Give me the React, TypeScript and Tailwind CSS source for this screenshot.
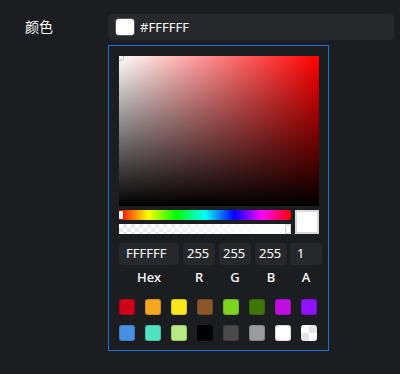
import React from 'react';

const row1 = ['#d0021b', '#f5a623', '#f8e71c', '#8b572a', '#7ed321', '#417505', '#bd10e0', '#9013fe'];
const row2 = ['#4a90e2', '#50e3c2', '#b8e986', '#000000', '#4a4a4a', '#9b9b9b', '#ffffff'];

function Swatch({ color }: { color: string }) {
  return (
    <div
      className="w-4 h-4 rounded-[3px] shadow-[inset_0_0_0_1px_rgba(0,0,0,0.15)]"
      style={{ backgroundColor: color }}
    />
  );
}

export default function App() {
  return (
    <div className="w-[400px] h-[374px] bg-[#1c1d21] text-white font-['Noto_Sans','Noto_Sans_CJK_SC',sans-serif] overflow-hidden">
      <div className="flex pt-[14px]">
        <div className="w-[108px] pl-[25px] pt-[4px] text-[14px] leading-[18px]">颜色</div>

        <div className="flex flex-col">
          {/* trigger */}
          <div className="w-[286px] h-[26px] rounded-[4px] bg-[#27282c] flex items-center pl-2 gap-[6px]">
            <div className="w-[18px] h-4 rounded-[3px] bg-white shadow-[0_0_0_1px_rgba(120,120,120,0.6)]" />
            <span className="text-[13px] leading-none">#FFFFFF</span>
          </div>

          {/* popover */}
          <div className="mt-[5px] w-[221px] border border-[#1f6fd8] pt-[10px] pl-[10px] pb-[9px]">
            <div className="relative w-[200px] h-[150px] bg-[#ff0000] overflow-hidden">
              <div className="absolute inset-0 bg-gradient-to-r from-white to-transparent" />
              <div className="absolute inset-0 bg-gradient-to-t from-black to-transparent" />
              <div className="absolute -left-[3px] -top-[3px] w-[7px] h-[7px] rounded-full border border-white shadow-[0_0_0_1px_rgba(0,0,0,0.3)]" />
            </div>

            <div className="flex mt-1 gap-1">
              <div className="flex flex-col gap-1">
                <div className="relative w-[172px] h-[10px] rounded-r-[2px] bg-[linear-gradient(to_right,#f00_0%,#ff0_17%,#0f0_33%,#0ff_50%,#00f_67%,#f0f_83%,#f00_100%)]">
                  <div className="absolute left-0 top-[1px] w-1 h-2 bg-white rounded-[1px] shadow-[0_0_2px_rgba(0,0,0,0.6)]" />
                </div>
                <div className="relative w-[172px] h-[10px] bg-white [background-image:conic-gradient(#e6e6e6_90deg,#fff_90deg_180deg,#e6e6e6_180deg_270deg,#fff_270deg)] [background-size:8px_8px]">
                  <div className="absolute inset-0 bg-gradient-to-r from-transparent to-white" />
                  <div className="absolute right-[1px] top-[1px] w-1 h-2 bg-white rounded-[1px] shadow-[0_0_0_1px_#ccc]" />
                </div>
              </div>
              <div className="w-6 h-6 bg-white border-2 border-[#d9d9d9]" />
            </div>

            <div className="flex gap-1 mt-[9px] text-[13px]">
              <div className="flex flex-col items-center">
                <div className="w-[60px] h-[22px] rounded-[4px] bg-[#27282c] flex items-center px-[7px]">FFFFFF</div>
                <div className="mt-[4px] text-[13px] leading-[16px] font-medium">Hex</div>
              </div>
              {['R', 'G', 'B'].map((l) => (
                <div key={l} className="flex flex-col items-center">
                  <div className="w-8 h-[22px] rounded-[4px] bg-[#27282c] flex items-center px-[4px]">255</div>
                  <div className="mt-[4px] text-[13px] leading-[16px] font-medium">{l}</div>
                </div>
              ))}
              <div className="flex flex-col items-center -ml-[1px]">
                <div className="w-8 h-[22px] rounded-[4px] bg-[#27282c] flex items-center px-[7px]">1</div>
                <div className="mt-[4px] text-[13px] leading-[16px] font-medium">A</div>
              </div>
            </div>

            <div className="mt-[14px] grid grid-cols-[repeat(8,16px)] gap-x-[10px] gap-y-[10px]">
              {row1.map((c) => (
                <Swatch key={c} color={c} />
              ))}
              {row2.map((c) => (
                <Swatch key={c} color={c} />
              ))}
              <div className="w-4 h-4 rounded-[3px] [background-image:conic-gradient(#e6e6e6_90deg,#fff_90deg_180deg,#e6e6e6_180deg_270deg,#fff_270deg)]" />
            </div>
          </div>
        </div>
      </div>
    </div>
  );
}
